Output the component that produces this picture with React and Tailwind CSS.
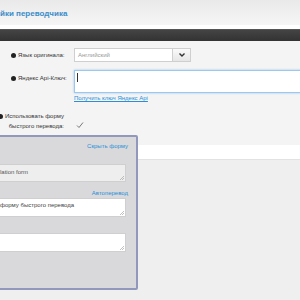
function Grip() {
  return (
    <svg className="absolute right-[1px] bottom-[1px]" width="4" height="4" viewBox="0 0 4 4">
      <path d="M0 4 L4 0 M2 4 L4 2" stroke="#999" strokeWidth="0.6" />
    </svg>
  );
}

export default function App() {
  return (
    <div className="relative w-[300px] h-[300px] overflow-hidden bg-[#f4f4f4] font-['Liberation_Sans',Arial,sans-serif]">
      {/* header */}
      <div className="h-[25px] bg-gradient-to-b from-[#e9e9e9] to-[#f6f6f6] flex items-end pb-[7px]">
        <span className="text-[8px] leading-none font-bold text-[#3a8cc9]">йки переводчика</span>
      </div>
      <div className="h-[4px] bg-white" />
      <div className="h-[12px] bg-gradient-to-b from-[#444] to-[#333] border-t border-[#555]" />

      {/* form */}
      <div className="h-[104px] flex flex-col">
        {/* row 1 */}
        <div className="mt-[7px] flex items-center h-[14px]">
          <div className="w-[74px] flex items-center pl-[11px] gap-[2px]">
            <span className="w-[5px] h-[5px] rounded-full bg-[#222]" />
            <span className="text-[6px] text-[#333] whitespace-nowrap">Язык оригинала:</span>
          </div>
          <div className="flex h-[14px] w-[117px] border border-[#cfcfcf] bg-white">
            <span className="flex-1 text-[6px] text-[#999] pl-[3px] flex items-center">Английский</span>
            <span className="w-[18px] border-l border-[#cfcfcf] bg-gradient-to-b from-[#fafafa] to-[#e6e6e6] flex items-center justify-center">
              <svg width="6" height="4" viewBox="0 0 6 4"><path d="M0.5 0.5 L3 3 L5.5 0.5" stroke="#333" strokeWidth="1.4" fill="none" /></svg>
            </span>
          </div>
        </div>
        {/* row 2 */}
        <div className="mt-[8px] flex items-start">
          <div className="w-[74px] flex items-center pl-[11px] gap-[2px] pt-[4px]">
            <span className="w-[5px] h-[5px] rounded-full bg-[#222]" />
            <span className="text-[6px] text-[#333] whitespace-nowrap">Яндекс Api-Ключ:</span>
          </div>
          <div className="flex-1 flex flex-col">
            <div className="h-[23px] border border-[#9cc7ee] shadow-[0_0_2px_#9cc7ee] bg-white -mr-[10px] pl-[2px] pt-[2px]">
              <span className="block w-px h-[9px] bg-[#333]" />
            </div>
            <span className="mt-[2px] text-[6px] text-[#2a8fd6] underline leading-none whitespace-nowrap">Получить ключ Яндекс Api</span>
          </div>
        </div>
        {/* row 3 */}
        <div className="mt-[10px] flex items-start">
          <div className="w-[74px] flex flex-col items-end pr-[10px] text-[6px] text-[#333] leading-[10px] whitespace-nowrap">
            <span className="flex items-center gap-[2px]"><span className="w-[5px] h-[5px] rounded-full bg-[#222]" />Использовать форму</span>
            <span>быстрого перевода:</span>
          </div>
          <div className="pt-[10px] pl-[2px]">
            <svg width="8" height="8" viewBox="0 0 8 8"><path d="M1 4.5 L3 6.5 L7 1.5" stroke="#777" strokeWidth="1" fill="none" /></svg>
          </div>
        </div>
      </div>
      <div className="h-[15px] bg-white border-b border-[#e2e2e2]" />
      <div className="h-[140px] bg-[#efefef]" />

      {/* popup panel */}
      <div className="absolute left-[-2px] top-[135px] w-[140px] h-[155px] bg-[#d9d9dc] border-2 border-[#9298bb] rounded-[2px] flex flex-col">
        <div className="flex justify-end pr-[8px] pt-[6px]">
          <span className="text-[6px] text-[#2a8fd6] leading-none">Скрыть форму</span>
        </div>
        <div className="relative mt-[15px] ml-[-3px] w-[129px] h-[18px] bg-[#eeeeee] border border-[#cfcfcf] text-[6px] text-[#555] pt-[3px] pl-[2px]">lation form<Grip /></div>
        <div className="flex justify-end pr-[8px] mt-[8px]">
          <span className="text-[6px] text-[#2a8fd6] leading-none">Автоперевод</span>
        </div>
        <div className="relative mt-[2px] ml-[-3px] w-[129px] h-[19px] bg-white border border-[#cfcfcf] text-[6px] text-[#444] pt-[2px] pl-[2px]">форму быстрого перевода<Grip /></div>
        <div className="relative mt-[16px] ml-[-3px] w-[129px] h-[19px] bg-white border border-[#cfcfcf]"><Grip /></div>
      </div>
    </div>
  );
}
